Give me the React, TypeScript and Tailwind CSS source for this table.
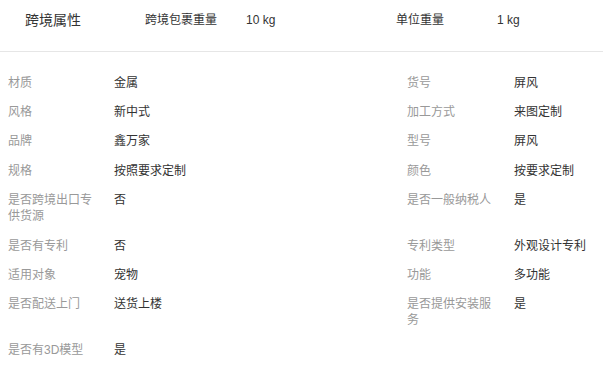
import React from "react";

const rows: [string, string, string, string][] = [
  ["材质", "金属", "货号", "屏风"],
  ["风格", "新中式", "加工方式", "来图定制"],
  ["品牌", "鑫万家", "型号", "屏风"],
  ["规格", "按照要求定制", "颜色", "按要求定制"],
  ["是否跨境出口专供货源", "否", "是否一般纳税人", "是"],
  ["是否有专利", "否", "专利类型", "外观设计专利"],
  ["适用对象", "宠物", "功能", "多功能"],
  ["是否配送上门", "送货上楼", "是否提供安装服务", "是"],
  ["是否有3D模型", "是", "", ""],
];

export default function App() {
  return (
    <div
      className="w-[603px] h-[368px] bg-white overflow-hidden text-[12px]"
      style={{ fontFamily: '"Liberation Sans", "Noto Sans CJK SC", sans-serif' }}
    >
      <div className="h-[52px] flex items-start pt-[12px] pl-[25px] border-b border-[#e6e6e6]">
        <div className="w-[120px] text-[14px] text-[#333] leading-[17px]">跨境属性</div>
        <div className="w-[101px] text-[#333] leading-[17px]">跨境包裹重量</div>
        <div className="w-[150px] text-[#333] leading-[17px]">10 kg</div>
        <div className="w-[101px] text-[#333] leading-[17px]">单位重量</div>
        <div className="text-[#333] leading-[17px]">1 kg</div>
      </div>
      <div className="pt-[16px] pl-[8px] grid grid-cols-[106px_293px_107px_1fr] leading-[16px]">
        {rows.map((r, i) => (
          <React.Fragment key={i}>
            <div className="py-[6.7px] pr-[12px] text-[#999]">{r[0]}</div>
            <div className="py-[6.7px] text-[#333]">{r[1]}</div>
            <div className="py-[6.7px] pr-[12px] text-[#999]">{r[2]}</div>
            <div className="py-[6.7px] text-[#333]">{r[3]}</div>
          </React.Fragment>
        ))}
      </div>
    </div>
  );
}
